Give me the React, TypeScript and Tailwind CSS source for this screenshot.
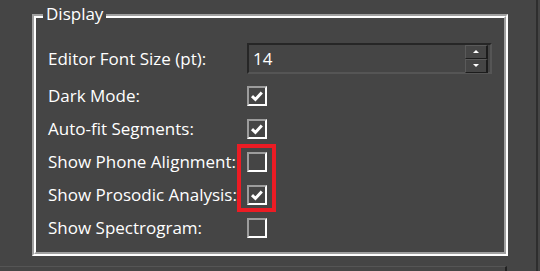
import React from "react";

const ROWS = [
  { label: "Dark Mode:", checked: true },
  { label: "Auto-fit Segments:", checked: true },
  { label: "Show Phone Alignment:", checked: false },
  { label: "Show Prosodic Analysis:", checked: true },
  { label: "Show Spectrogram:", checked: false },
];

function CheckBox({ checked }: { checked: boolean }) {
  return (
    <div className="w-5 h-5 border-2 border-t-[#9c9c9c] border-l-[#9c9c9c] border-b-white border-r-white">
      {checked && (
        <svg width="16" height="16" viewBox="0 0 16 16" className="block">
          <path d="M3 8.2 L6.4 11.4 L12.8 4.4" fill="none" stroke="#ffffff" strokeWidth="3" strokeLinejoin="miter" />
        </svg>
      )}
    </div>
  );
}

function SpinBox({ value }: { value: string }) {
  return (
    <div className="w-[245px] h-[31px] border-2 border-t-[#262626] border-l-[#262626] border-b-[#555555] border-r-[#555555] flex items-center justify-between pl-[4px] pr-[2px]">
      <span className="text-[17px] leading-none">{value}</span>
      <div className="flex flex-col w-[23px]">
        <button className="h-[14px] border border-t-[#5a5a5a] border-l-[#5a5a5a] border-b-[#1c1c1c] border-r-[#1c1c1c] border-r-2 flex items-center justify-center">
          <span className="w-0 h-0 border-l-[3px] border-r-[3px] border-b-[3px] border-l-transparent border-r-transparent border-b-white" />
        </button>
        <button className="h-[14px] border border-t-[#5a5a5a] border-l-[#5a5a5a] border-b-[#1c1c1c] border-r-[#1c1c1c] border-r-2 flex items-center justify-center">
          <span className="w-0 h-0 border-l-[3px] border-r-[3px] border-t-[3px] border-l-transparent border-r-transparent border-t-white" />
        </button>
      </div>
    </div>
  );
}

export default function App() {
  return (
    <div
      className="relative w-[540px] h-[271px] overflow-hidden bg-[#454545] text-white"
      style={{ fontFamily: '"Open Sans", "Noto Sans", sans-serif' }}
    >
      {/* Display group box */}
      <div className="absolute left-[32px] top-[14px] w-[476px] h-[242px] border-2 border-t-[#a0a0a0] border-l-[#a0a0a0] border-b-white border-r-white">
        <div className="w-full h-full border-2 border-t-white border-l-white border-b-[#a0a0a0] border-r-[#a0a0a0] pl-[12px] pt-[25px]">
          <div className="flex items-center h-[31px]">
            <span className="w-[199px] text-[17px] whitespace-nowrap">Editor Font Size (pt):</span>
            <SpinBox value="14" />
          </div>
          <div className="mt-[5px] flex flex-col">
            {ROWS.map((row) => (
              <div key={row.label} className="flex items-center h-[33px]">
                <span className="w-[199px] text-[17px] whitespace-nowrap">{row.label}</span>
                <CheckBox checked={row.checked} />
              </div>
            ))}
          </div>
        </div>
        <span className="absolute left-[9px] top-[-13px] px-[3px] bg-[#454545] text-[17px] leading-[22px]">Display</span>
      </div>

      {/* highlight annotation */}
      <div className="absolute left-[237px] top-[144px] w-[39px] h-[68px] border-4 border-[#ec1c24]" />

      {/* next control peeking at bottom */}
      <div className="absolute left-0 top-[266px] w-[507px] h-[10px] border-t border-[#555555] border-r-2 border-r-[#222222]" />
      <div className="absolute right-[2px] top-0 w-[2px] h-full bg-[#2e2e2e]" />
    </div>
  );
}
